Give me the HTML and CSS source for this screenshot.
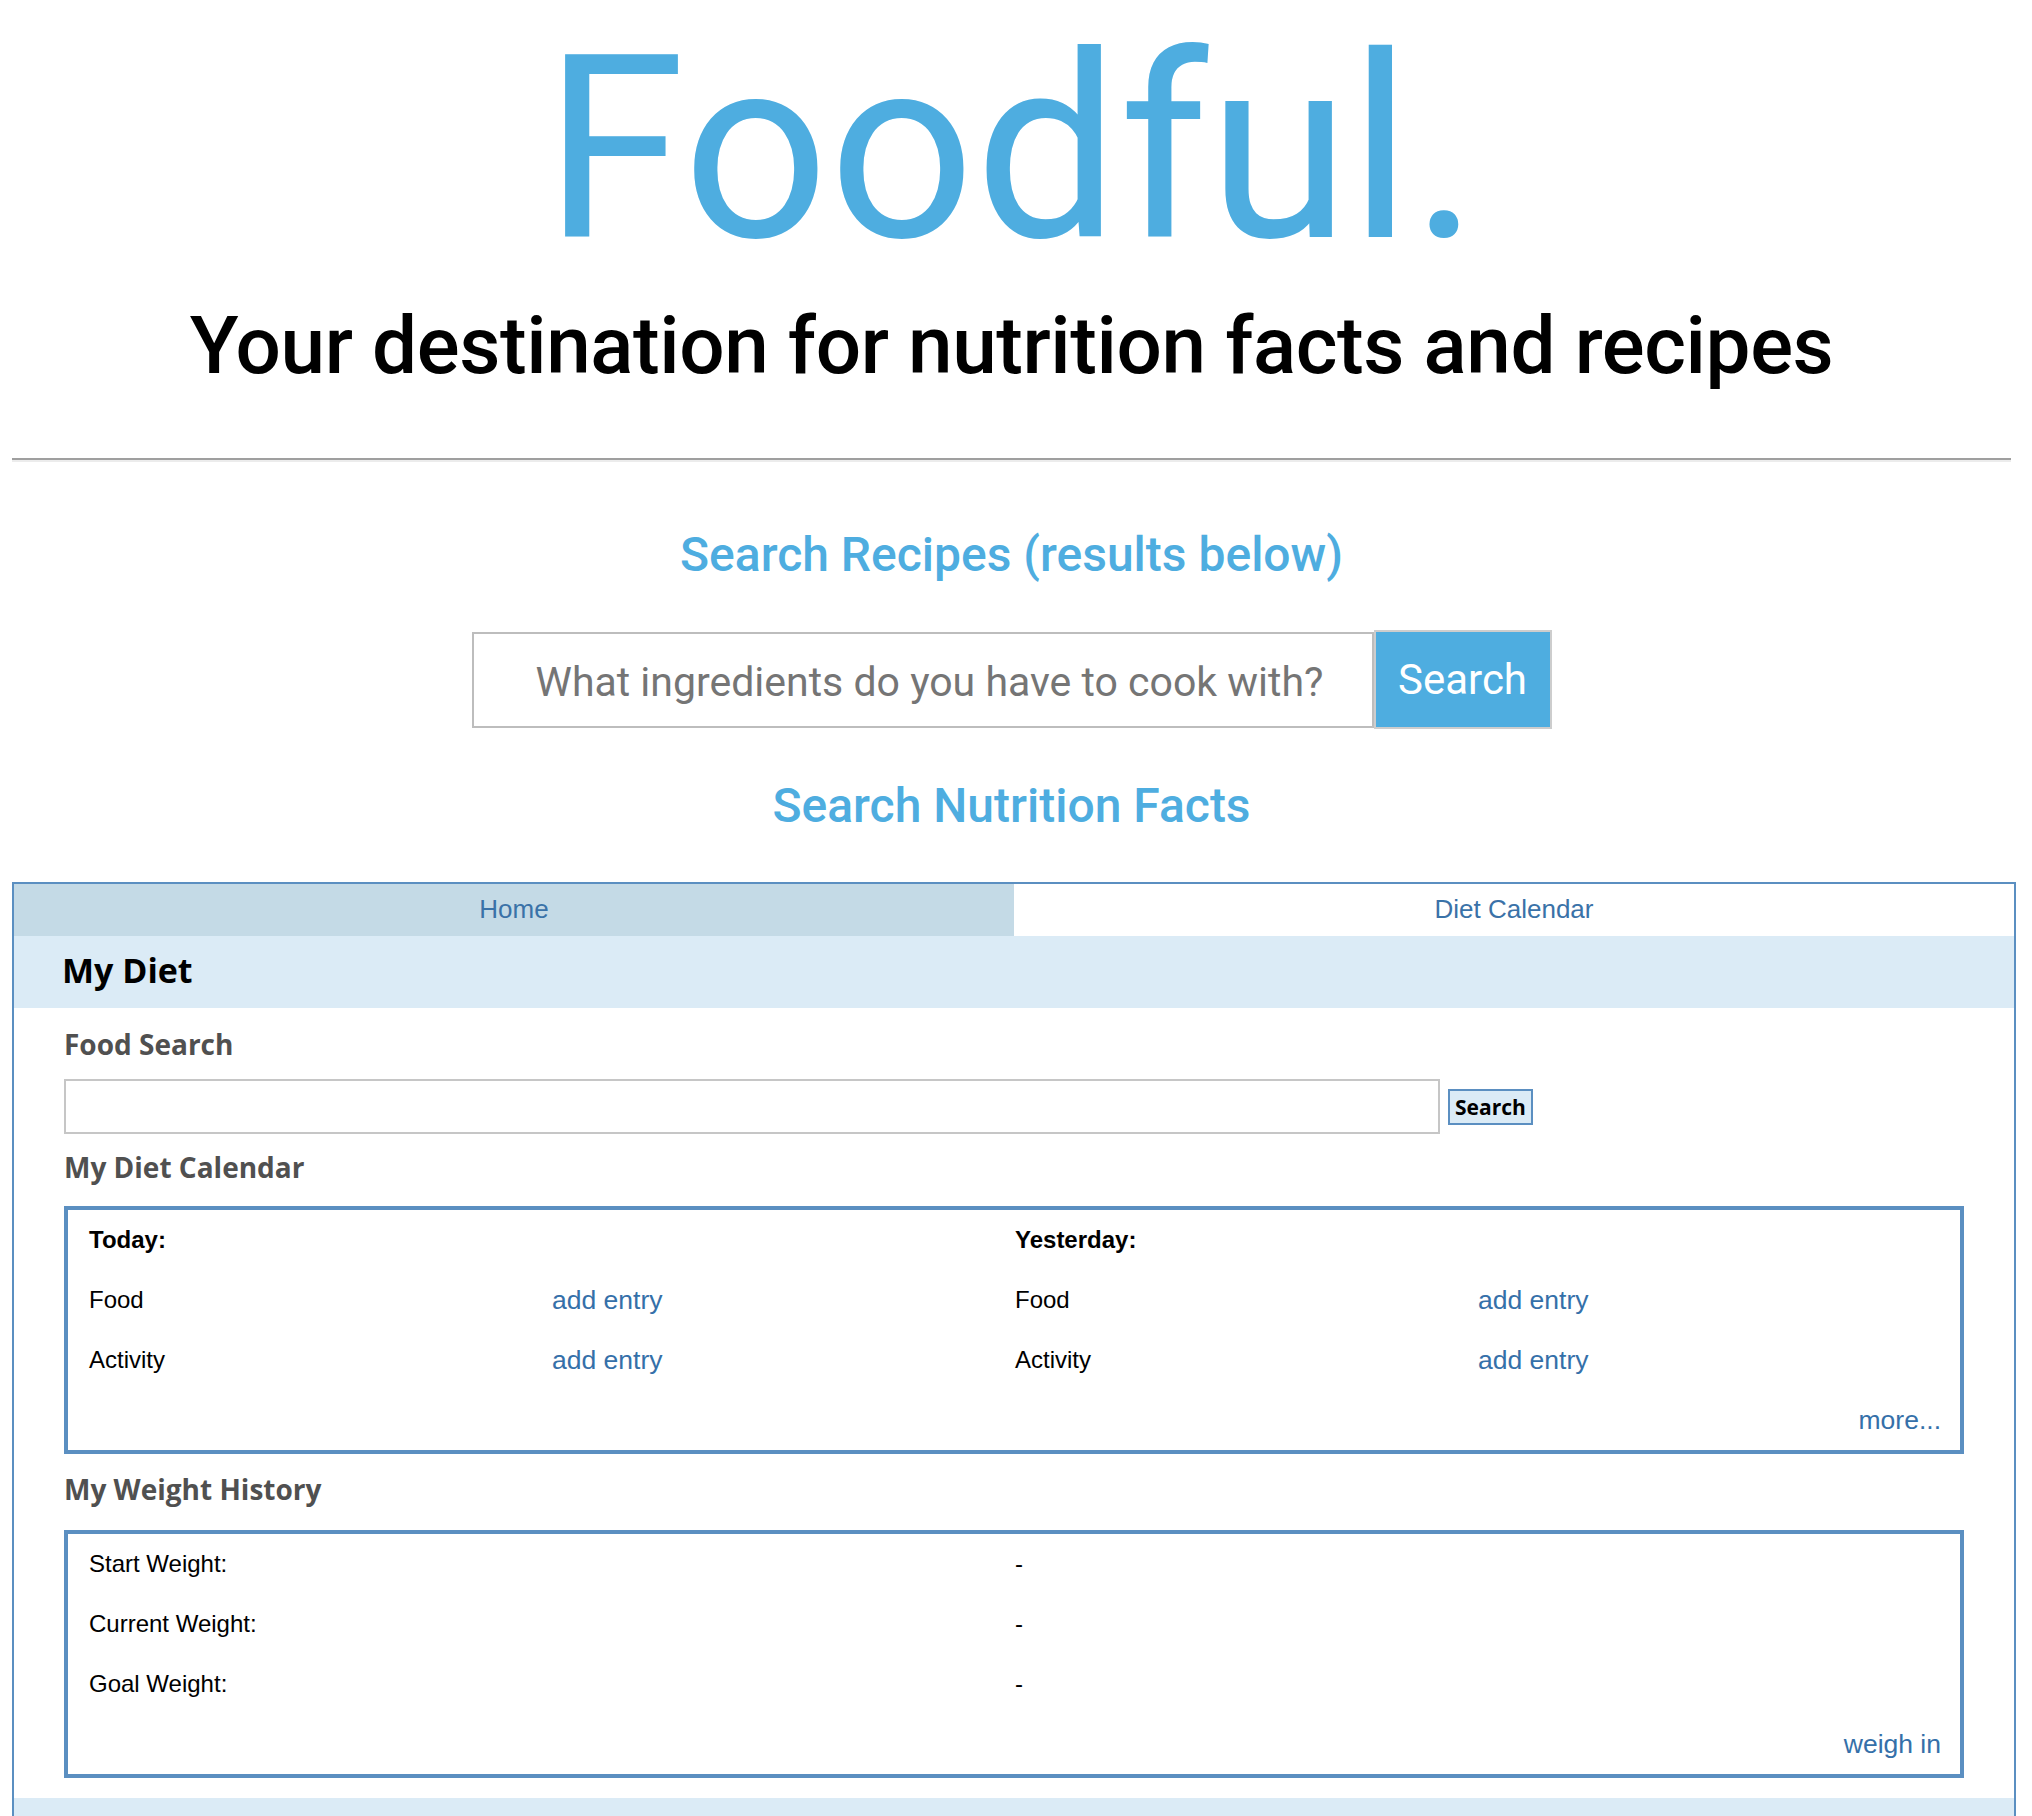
FILE: index.html
```html
<!DOCTYPE html>
<html lang="en">
<head>
<meta charset="utf-8">
<title>Foodful.</title>
<link rel="stylesheet" href="styles.css">
</head>
<body>
<div class="top">
  <header class="masthead">
    <h1 class="logo">Foodful.</h1>
    <h2 class="tagline">Your destination for nutrition facts and recipes</h2>
  </header>
  <hr class="divider">
  <section class="recipes">
    <h3 class="section-title">Search Recipes (results below)</h3>
    <form class="recipe-search">
      <input class="recipe-input" type="text" placeholder="What ingredients do you have to cook with?">
      <button class="recipe-btn" type="button">Search</button>
    </form>
    <h3 class="section-title nutrition">Search Nutrition Facts</h3>
  </section>
</div>

<div class="widget">
  <nav class="tabs">
    <a class="tab active">Home</a>
    <a class="tab">Diet Calendar</a>
  </nav>
  <div class="band"><h4 class="band-title">My Diet</h4></div>
  <div class="content">
    <h5 class="sub sub-first">Food Search</h5>
    <div class="food-search">
      <input class="food-input" type="text">
      <button class="food-btn" type="button">Search</button>
    </div>

    <h5 class="sub sub-cal">My Diet Calendar</h5>
    <div class="panel panel-cal">
      <div class="cell strong">Today:</div>
      <div class="cell"></div>
      <div class="cell strong">Yesterday:</div>
      <div class="cell"></div>

      <div class="cell">Food</div>
      <div class="cell"><a class="link">add entry</a></div>
      <div class="cell">Food</div>
      <div class="cell"><a class="link">add entry</a></div>

      <div class="cell">Activity</div>
      <div class="cell"><a class="link">add entry</a></div>
      <div class="cell">Activity</div>
      <div class="cell"><a class="link">add entry</a></div>

      <div class="cell full"><a class="link">more...</a></div>
    </div>

    <h5 class="sub sub-weight">My Weight History</h5>
    <div class="panel panel-weight">
      <div class="cell">Start Weight:</div>
      <div class="cell">-</div>
      <div class="cell">Current Weight:</div>
      <div class="cell">-</div>
      <div class="cell">Goal Weight:</div>
      <div class="cell">-</div>
      <div class="cell full"><a class="link">weigh in</a></div>
    </div>
  </div>
  <div class="band band-next"></div>
</div>
</body>
</html>
```

FILE: styles.css
```css
html, body {
  margin: 0;
  padding: 0;
  background: #ffffff;
}

body {
  font-family: Roboto, "Liberation Sans", sans-serif;
  overflow: hidden;
}

.top {
  margin-left: 12px;
  width: 1999px;
}

.masthead {
  text-align: center;
}

.logo {
  margin: 0;
  font-family: Roboto, sans-serif;
  font-size: 256px;
  line-height: 300px;
  font-weight: 400;
  color: #4eade0;
}

.tagline {
  margin: 0;
  font-family: Roboto, sans-serif;
  font-size: 80px;
  line-height: 92px;
  font-weight: 500;
  letter-spacing: -0.4px;
  color: #000000;
}

.divider {
  margin: 66px 0 0;
  width: 100%;
  height: 0;
  border: 0;
  border-top: 2px solid #9f9f9f;
  border-bottom: 2px solid #ececec;
}

.recipes {
  text-align: center;
}

.section-title {
  margin: 63px 0 0;
  font-family: Roboto, sans-serif;
  font-size: 48px;
  line-height: 60px;
  font-weight: 500;
  color: #4eade0;
}

.section-title.nutrition {
  margin-top: 47px;
}

.recipe-search {
  display: flex;
  justify-content: center;
  align-items: center;
  margin: 45px 0 0;
}

.recipe-input {
  box-sizing: border-box;
  width: 902px;
  height: 96px;
  margin: 0;
  padding: 4px 0 0 62px;
  border: 2px solid #bdbdbd;
  font-family: Roboto, sans-serif;
  font-size: 41px;
  color: #333333;
  outline: none;
  background: #ffffff;
}

.recipe-input::placeholder {
  color: #757575;
}

.recipe-btn {
  box-sizing: border-box;
  width: 178px;
  height: 99px;
  margin: 0;
  padding: 0;
  border: 2px solid #cdcdcd;
  background: #4eade0;
  color: #ffffff;
  font-family: Roboto, sans-serif;
  font-size: 42px;
  font-weight: 400;
}

.widget {
  box-sizing: border-box;
  margin: 46px 0 0 12px;
  width: 2004px;
  border: 2px solid #5b8fc1;
  border-bottom: 0;
}

.tabs {
  display: flex;
  height: 52px;
}

.tab {
  flex: 1;
  text-align: center;
  line-height: 50px;
  font-family: "Liberation Sans", Arial, sans-serif;
  font-size: 26px;
  color: #3a72a8;
  background: #ffffff;
}

.tab.active {
  background: #c4dae6;
}

.band {
  height: 72px;
  padding: 0 48px;
  background: #dbebf6;
}

.band-title {
  margin: 0;
  font-family: "Open Sans", sans-serif;
  font-size: 34px;
  font-weight: 700;
  line-height: 68px;
  color: #000000;
}

.band-next {
  margin-top: 20px;
}

.content {
  padding: 0 50px;
}

.sub {
  margin: 18px 0 0;
  font-family: "Open Sans", sans-serif;
  font-size: 28px;
  font-weight: 700;
  line-height: 36px;
  color: #505050;
}

.sub-cal {
  margin-top: 15px;
}

.sub-weight {
  margin-top: 17px;
}

.food-search {
  display: flex;
  align-items: center;
  margin-top: 17px;
}

.food-input {
  box-sizing: border-box;
  width: 1376px;
  height: 55px;
  margin: 0;
  border: 2px solid #c6c6c6;
  outline: none;
  background: #ffffff;
}

.food-btn {
  box-sizing: border-box;
  height: 36px;
  margin: 0 0 0 8px;
  padding: 0 5px;
  border: 2px solid #5b8fc1;
  background: #dbebf6;
  color: #000000;
  font-family: "Open Sans", sans-serif;
  font-size: 21px;
  font-weight: 700;
  line-height: 30px;
}

.panel {
  display: grid;
  margin-top: 21px;
  padding: 0 19px 0 21px;
  border: 4px solid #5b8fc1;
  font-family: "Liberation Sans", Arial, sans-serif;
  font-size: 24px;
  color: #000000;
}

.panel-cal {
  grid-template-columns: repeat(4, 1fr);
}

.panel-weight {
  margin-top: 23px;
  grid-template-columns: repeat(2, 1fr);
}

.cell {
  height: 60px;
  line-height: 60px;
  white-space: nowrap;
}

.cell.strong {
  font-weight: 700;
}

.cell.full {
  grid-column: 1 / -1;
  text-align: right;
}

.link {
  font-size: 26.5px;
  color: #3570a9;
  text-decoration: none;
}
```
